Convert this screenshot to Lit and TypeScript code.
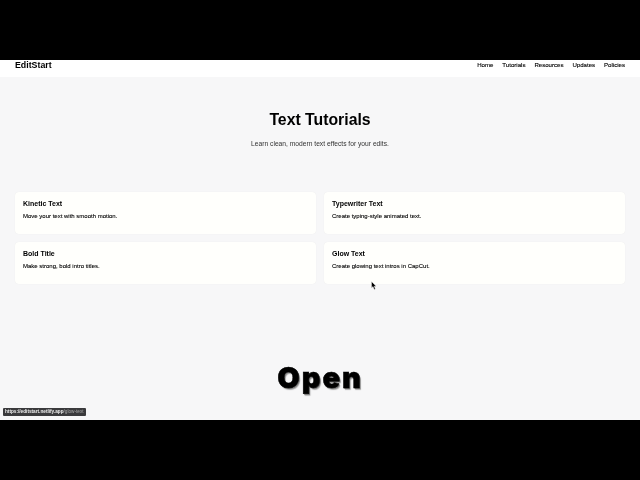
import { LitElement, html, css } from "lit";
import { customElement } from "lit/decorators.js";

const CARDS = [
  ["Kinetic Text", "Move your text with smooth motion."],
  ["Typewriter Text", "Create typing-style animated text."],
  ["Bold Title", "Make strong, bold intro titles."],
  ["Glow Text", "Create glowing text intros in CapCut."],
];
const LINKS = ["Home", "Tutorials", "Resources", "Updates", "Policies"];

@customElement("app-root")
export class AppRoot extends LitElement {
  static styles = css`
    :host { display: block; width: 640px; height: 480px; box-sizing: border-box; padding: 60px 0; background: #000; font-family: "Liberation Sans", Arial, sans-serif; color: #000; overflow: hidden; }
    .frame { position: relative; height: 360px; background: #f7f7f8; display: flex; flex-direction: column; overflow: hidden; filter: blur(0.3px); }
    .nav { height: 17px; background: #fff; display: flex; justify-content: space-between; align-items: flex-start; padding: 0 15px; flex: none; }
    .brand { font-size: 8.8px; font-weight: 700; line-height: 10px; }
    .links { display: flex; gap: 8.9px; font-size: 6.1px; line-height: 10px; color: #000; -webkit-text-stroke: .12px #000; }
    .hero { height: 115px; flex: none; text-align: center; }
    h1 { margin: 0; padding-top: 33px; font-size: 15.8px; line-height: 19px; font-weight: 700; }
    .sub { margin: 10px 0 0; font-size: 6.7px; line-height: 10px; color: #333; }
    .grid { display: grid; grid-template-columns: 1fr 1fr; gap: 8px; padding: 0 15px; }
    .card { background: #fffffc; border-radius: 4px; height: 42px; box-sizing: border-box; padding: 7px 8px; box-shadow: 0 0 1px rgba(0,0,0,.08); }
    h3 { margin: 0; font-size: 7px; line-height: 9px; font-weight: 700; }
    .card p { margin: 4px 0 0; font-size: 6px; line-height: 8px; color: #000; -webkit-text-stroke: .1px #000; }
    .caption { position: absolute; left: 0; right: 0; top: 302px; text-align: center; font-family: Inter, "DejaVu Sans", sans-serif; font-weight: 900; font-size: 29px; line-height: 32px; letter-spacing: 2px; color: #000; -webkit-text-stroke: .5px #000; text-shadow: 1px 1px 0 #777, 1.5px 1.5px 1px #aaa; }
    .status { position: absolute; left: 3px; top: 348px; height: 8px; padding: 0 2px; background: #3a3a3c; border-radius: 1px; color: #eee; font-size: 4.7px; line-height: 8px; white-space: nowrap; font-weight: 700; }
    .status span { color: #aaa; font-weight: 400; }
    .cursor { position: absolute; left: 371px; top: 221px; width: 6px; height: 9px; }
  `;
  render() {
    return html`
      <div class="frame">
        <div class="nav">
          <div class="brand">EditStart</div>
          <div class="links">${LINKS.map((l) => html`<span>${l}</span>`)}</div>
        </div>
        <div class="hero">
          <h1>Text Tutorials</h1>
          <p class="sub">Learn clean, modern text effects for your edits.</p>
        </div>
        <div class="grid">
          ${CARDS.map(([t, d]) => html`<div class="card"><h3>${t}</h3><p>${d}</p></div>`)}
        </div>
        <div class="caption">Open</div>
        <div class="status">https://editstart.netlify.app<span>/glow-text</span></div>
        <svg class="cursor" viewBox="0 0 6 9"><path d="M0.5 0.5V7L2 5.6 3.2 8.4 4.4 7.9 3.2 5.2H5.2Z" fill="#000" stroke="#fff" stroke-width=".4"/></svg>
      </div>
    `;
  }
}
